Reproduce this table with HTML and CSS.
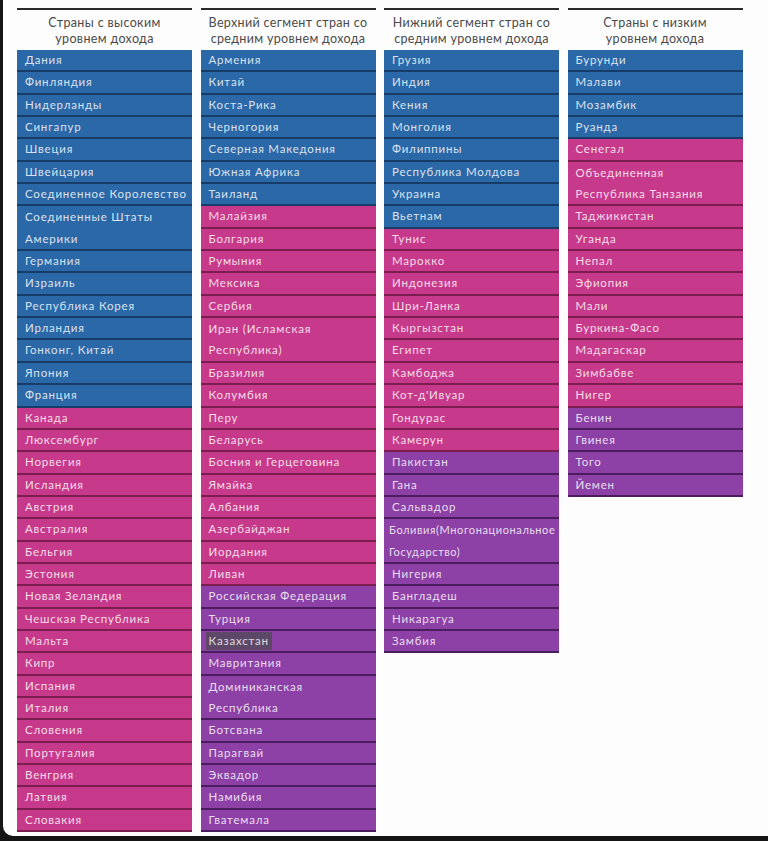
FILE: index.html
```html
<!DOCTYPE html>
<html lang="ru">
<head>
<meta charset="utf-8">
<title>Группы стран по уровню дохода</title>
<link rel="stylesheet" href="styles.css">
</head>
<body>
<div class="card">
  <div class="table">
    <section class="col">
      <h2 class="head">Страны с высоким<br>уровнем дохода</h2>
      <ul class="list">
        <li class="b">Дания</li>
        <li class="b">Финляндия</li>
        <li class="b">Нидерланды</li>
        <li class="b">Сингапур</li>
        <li class="b">Швеция</li>
        <li class="b">Швейцария</li>
        <li class="b">Соединенное Королевство</li>
        <li class="b two">Соединенные Штаты<br>Америки</li>
        <li class="b">Германия</li>
        <li class="b">Израиль</li>
        <li class="b">Республика Корея</li>
        <li class="b">Ирландия</li>
        <li class="b">Гонконг, Китай</li>
        <li class="b">Япония</li>
        <li class="b">Франция</li>
        <li class="p">Канада</li>
        <li class="p">Люксембург</li>
        <li class="p">Норвегия</li>
        <li class="p">Исландия</li>
        <li class="p">Австрия</li>
        <li class="p">Австралия</li>
        <li class="p">Бельгия</li>
        <li class="p">Эстония</li>
        <li class="p">Новая Зеландия</li>
        <li class="p">Чешская Республика</li>
        <li class="p">Мальта</li>
        <li class="p">Кипр</li>
        <li class="p">Испания</li>
        <li class="p">Италия</li>
        <li class="p">Словения</li>
        <li class="p">Португалия</li>
        <li class="p">Венгрия</li>
        <li class="p">Латвия</li>
        <li class="p">Словакия</li>
      </ul>
    </section>
    <section class="col">
      <h2 class="head">Верхний сегмент стран со<br>средним уровнем дохода</h2>
      <ul class="list">
        <li class="b">Армения</li>
        <li class="b">Китай</li>
        <li class="b">Коста-Рика</li>
        <li class="b">Черногория</li>
        <li class="b">Северная Македония</li>
        <li class="b">Южная Африка</li>
        <li class="b">Таиланд</li>
        <li class="p">Малайзия</li>
        <li class="p">Болгария</li>
        <li class="p">Румыния</li>
        <li class="p">Мексика</li>
        <li class="p">Сербия</li>
        <li class="p two">Иран (Исламская<br>Республика)</li>
        <li class="p">Бразилия</li>
        <li class="p">Колумбия</li>
        <li class="p">Перу</li>
        <li class="p">Беларусь</li>
        <li class="p">Босния и Герцеговина</li>
        <li class="p">Ямайка</li>
        <li class="p">Албания</li>
        <li class="p">Азербайджан</li>
        <li class="p">Иордания</li>
        <li class="p">Ливан</li>
        <li class="v">Российская Федерация</li>
        <li class="v">Турция</li>
        <li class="v"><span class="mark">Казахстан</span></li>
        <li class="v">Мавритания</li>
        <li class="v two">Доминиканская<br>Республика</li>
        <li class="v">Ботсвана</li>
        <li class="v">Парагвай</li>
        <li class="v">Эквадор</li>
        <li class="v">Намибия</li>
        <li class="v">Гватемала</li>
      </ul>
    </section>
    <section class="col">
      <h2 class="head">Нижний сегмент стран со<br>средним уровнем дохода</h2>
      <ul class="list">
        <li class="b">Грузия</li>
        <li class="b">Индия</li>
        <li class="b">Кения</li>
        <li class="b">Монголия</li>
        <li class="b">Филиппины</li>
        <li class="b">Республика Молдова</li>
        <li class="b">Украина</li>
        <li class="b">Вьетнам</li>
        <li class="p">Тунис</li>
        <li class="p">Марокко</li>
        <li class="p">Индонезия</li>
        <li class="p">Шри-Ланка</li>
        <li class="p">Кыргызстан</li>
        <li class="p">Египет</li>
        <li class="p">Камбоджа</li>
        <li class="p">Кот-д'Ивуар</li>
        <li class="p">Гондурас</li>
        <li class="p">Камерун</li>
        <li class="v">Пакистан</li>
        <li class="v">Гана</li>
        <li class="v">Сальвадор</li>
        <li class="v two tight">Боливия(Многонациональное<br>Государство)</li>
        <li class="v">Нигерия</li>
        <li class="v">Бангладеш</li>
        <li class="v">Никарагуа</li>
        <li class="v">Замбия</li>
      </ul>
    </section>
    <section class="col">
      <h2 class="head">Страны с низким<br>уровнем дохода</h2>
      <ul class="list">
        <li class="b">Бурунди</li>
        <li class="b">Малави</li>
        <li class="b">Мозамбик</li>
        <li class="b">Руанда</li>
        <li class="p">Сенегал</li>
        <li class="p two">Объединенная<br>Республика Танзания</li>
        <li class="p">Таджикистан</li>
        <li class="p">Уганда</li>
        <li class="p">Непал</li>
        <li class="p">Эфиопия</li>
        <li class="p">Мали</li>
        <li class="p">Буркина-Фасо</li>
        <li class="p">Мадагаскар</li>
        <li class="p">Зимбабве</li>
        <li class="p">Нигер</li>
        <li class="v">Бенин</li>
        <li class="v">Гвинея</li>
        <li class="v">Того</li>
        <li class="v">Йемен</li>
      </ul>
    </section>
  </div>
</div>
</body>
</html>
```

FILE: styles.css
```css
* { box-sizing: border-box; }
html, body { margin: 0; padding: 0; }
body {
  background: #151515;
  width: 768px;
  height: 841px;
  overflow: hidden;
  font-family: Lato, "Open Sans", "Liberation Sans", sans-serif;
}
.card {
  background: #fdfdfd;
  margin-left: 3px;
  height: 836px;
  border-bottom-left-radius: 10px;
  padding-top: 8px;
  padding-left: 14px;
}
.table {
  display: grid;
  grid-template-columns: repeat(4, 175px);
  column-gap: 8.5px;
  align-items: start;
}
.head {
  margin: 0;
  border-top: 2px solid #2a2a2a;
  height: 42px;
  padding-top: 5px;
  font-weight: 400;
  font-size: 12.5px;
  line-height: 16px;
  letter-spacing: 0.35px;
  color: #4a4a4a;
  text-align: center;
}
.list {
  list-style: none;
  margin: 0;
  padding: 0;
}
.list li {
  height: 22.35px;
  padding-left: 8px;
  border-bottom-width: 2px;
  border-bottom-style: solid;
  font-size: 11.5px;
  line-height: 20.35px;
  letter-spacing: 0.8px;
  color: rgba(255, 255, 255, 0.84);
  white-space: nowrap;
  overflow: hidden;
}
.list li.two {
  height: 44.7px;
  line-height: 21.35px;
}
.list li.tight {
  letter-spacing: 0.6px;
  font-size: 11px;
  padding-left: 5px;
}
.list li.b { background: #2b68a7; border-bottom-color: #183c68; }
.list li.p { background: #c7398a; border-bottom-color: #7c1d4f; }
.list li.v { background: #8d40a6; border-bottom-color: #4b1c5e; }
.mark {
  background: #5d4867;
  padding: 2px 3px 3px;
  margin-left: -3px;
  color: rgba(255, 255, 255, 0.8);
}
```
